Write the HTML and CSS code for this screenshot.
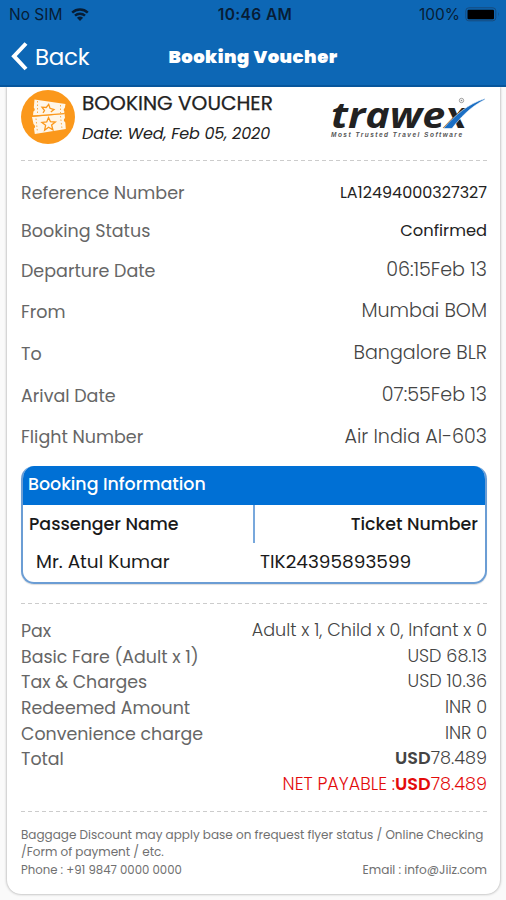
FILE: index.html
```html
<!DOCTYPE html>
<html lang="en">
<head>
<meta charset="utf-8">
<title>Booking Voucher</title>
<link rel="stylesheet" href="styles.css">
</head>
<body>
<header class="topbar">
  <div class="status">
    <div class="carrier"><span>No SIM</span>
      <svg class="wifi" viewBox="0 0 18 13"><path d="M1.2 4.6a11.4 11.4 0 0 1 15.6 0M4 7.6a7.4 7.4 0 0 1 10 0" fill="none" stroke="#071d35" stroke-width="2.5"/><path d="M5.9 9.8a4.6 4.6 0 0 1 6.2 0L9 13z" fill="#071d35"/></svg>
    </div>
    <div class="clock">10:46 AM</div>
    <div class="power"><span>100%</span>
      <svg class="battery" viewBox="0 0 36 15"><rect x=".8" y=".8" width="30" height="13" rx="3" fill="none" stroke="#174b7d" stroke-width="1"/><rect x="2.5" y="2.8" width="26.5" height="9.5" rx="1" fill="#000"/><path d="M33 5v4.500q1.500-2.250 0-4.500" fill="#174b7d"/></svg>
    </div>
  </div>
  <nav class="nav">
    <a class="back"><svg class="chevron" viewBox="0 0 18 29"><path d="M16 1.500L4 14.200L16 27" fill="none" stroke="#fff" stroke-width="4"/></svg><span>Back</span></a>
    <h1>Booking Voucher</h1>
  </nav>
</header>
<main class="card">
  <section class="heading">
    <svg class="ticket" viewBox="0 0 54 54"><circle cx="27" cy="27" r="27" fill="#fb981b"/>
      <g fill="#fff6e8"><path d="M13.500 9.500L44.500 14l-.7 4q-2 1.500-.4 3.500l-.4 3-31 1 .4-4q2.500-1.500.4-4z"/><path d="M11 27l32.500-3 .5 4q-2.500 2 .3 4.500l.5 6.500-31 5-.8-5.500q2.500-2-.5-4.500z"/></g>
      <g fill="none" stroke="#fb981b" stroke-width="1.300"><path d="M11.500 26.200L43 23.600"/><path d="M22 22.800l1.500-2.300-2.500-3.300 4.200.3 2.500-3.200 1.300 4 4 1.300-3.200 2.400"/><path d="M27.500 27.500l2 4.200 4.800.3-3.700 3 1.300 4.800-4.300-2.500-4 2.900 1-4.900-3.700-2.900 4.800-.5z"/><path d="M16.500 11v13M39.500 15v8M15 28.500l1.500 14M39.500 26l1.500 13" stroke-width=".8" stroke-dasharray="1.500 2"/></g>
    </svg>
    <div class="title"><h2>BOOKING VOUCHER</h2><p>Date: Wed, Feb 05, 2020</p></div>
    <svg class="logo" viewBox="0 0 158 44">
      <text class="logo-name" x="0" y="33" textLength="136" lengthAdjust="spacingAndGlyphs">trawex</text>
      <path d="M112.500 33.500C124 20 137 9 154 3.500V4.500C139 12 129 23 121 33.500z" fill="#1b6fc4" stroke="#fff" stroke-width=".6"/>
      <circle cx="130.500" cy="5.500" r="2.200" fill="none" stroke="#888" stroke-width=".8"/><circle cx="130.500" cy="5.500" r=".8" fill="#888"/>
      <text class="logo-tag" x="0" y="42" textLength="131">Most Trusted Travel Software</text>
    </svg>
  </section>
  <hr>
  <dl class="details">
    <div class="r1"><dt>Reference Number</dt><dd class="code">LA12494000327327</dd></div>
    <div class="r2"><dt>Booking Status</dt><dd class="strong">Confirmed</dd></div>
    <div class="r3"><dt>Departure Date</dt><dd>06:15Feb 13</dd></div>
    <div class="r4"><dt>From</dt><dd>Mumbai BOM</dd></div>
    <div class="r5"><dt>To</dt><dd>Bangalore BLR</dd></div>
    <div class="r6"><dt>Arival Date</dt><dd>07:55Feb 13</dd></div>
    <div class="r7"><dt>Flight Number</dt><dd>Air India AI-603</dd></div>
  </dl>
  <section class="info">
    <h3>Booking Information</h3>
    <div class="cols"><b>Passenger Name</b><b class="ticket-head">Ticket Number</b></div>
    <div class="vals"><span>Mr. Atul Kumar</span><span>TIK24395893599</span></div>
  </section>
  <hr>
  <dl class="fare">
    <div><dt>Pax</dt><dd>Adult x 1, Child x 0, Infant x 0</dd></div>
    <div><dt>Basic Fare (Adult x 1)</dt><dd>USD 68.13</dd></div>
    <div><dt>Tax &amp; Charges</dt><dd>USD 10.36</dd></div>
    <div><dt>Redeemed Amount</dt><dd>INR 0</dd></div>
    <div><dt>Convenience charge</dt><dd>INR 0</dd></div>
    <div><dt>Total</dt><dd><b>USD</b>78.489</dd></div>
    <div class="net"><dd>NET PAYABLE :<b>USD</b>78.489</dd></div>
  </dl>
  <hr>
  <footer>
    <p class="note">Baggage Discount may apply base on frequest flyer status / Online Checking<br>/Form of payment / etc.</p>
    <div class="contact"><span>Phone : +91 9847 0000 0000</span><span class="mail">Email : info@Jiiz.com</span></div>
  </footer>
</main>
</body>
</html>
```
FILE: styles.css
```css
* { box-sizing: border-box; margin: 0; }
body { width: 506px; height: 900px; overflow: hidden; background: #fafafa; font-family: Poppins, Inter, sans-serif; color: #666; display: flex; flex-direction: column; }
.topbar { height: 87px; flex: none; background: #0d67b5; border-bottom: 2px solid #07569c; }
.status { height: 29px; display: grid; grid-template-columns: 1fr auto 1fr; align-items: center; padding: 0 5px 0 9px; font-family: Inter, sans-serif; font-size: 15.500px; color: #071d35; white-space: nowrap; }
.carrier, .power { display: flex; align-items: center; }
.carrier { gap: 9px; }
.power { justify-content: flex-end; gap: 5px; }
.wifi { width: 18px; height: 13px; }
.battery { width: 36px; height: 15px; }
.clock { font-weight: 600; letter-spacing: .4px; }
.nav { height: 56px; display: grid; grid-template-columns: 1fr auto 1fr; align-items: center; color: #fff; }
.back { display: flex; align-items: center; gap: 7px; padding-left: 10px; font-size: 23px; letter-spacing: -.3px; }
.back span { margin-top: -1px; }
.chevron { width: 18px; height: 29px; margin-top: -2px; }
h1 { font-size: 18px; line-height: 24px; font-weight: 900; letter-spacing: .5px; }
.card { width: 493px; height: 807px; flex: none; margin-left: 7px; padding: 0 13px 0 14px; background: #fff; border-radius: 0 0 14px 14px; box-shadow: 0 0 3px rgba(0,0,0,.4); clip-path: inset(0 -5px -6px -5px); }
.heading { height: 73px; display: flex; padding-top: 3px; }
.ticket { width: 54px; height: 54px; flex: none; }
.title { flex: 1; min-width: 0; margin-left: 7px; color: #222; white-space: nowrap; }
h2 { font-size: 20.100px; line-height: 26px; font-weight: 400; -webkit-text-stroke: .25px #222; }
.title p { font-size: 16px; line-height: 24px; margin-top: 6px; font-style: italic; letter-spacing: -.1px; }
.logo { width: 158px; height: 44px; flex: none; margin-top: 5px; margin-right: -2px; overflow: visible; }
.logo-name { font: italic 700 36px "Open Sans", sans-serif; fill: #222; }
.logo-tag { font: italic 600 6.500px "Liberation Sans", sans-serif; fill: #555; }
hr { height: 1px; border: 0; background: repeating-linear-gradient(90deg, #ccc 0 4px, transparent 4px 7px); }
dl div { display: flex; justify-content: space-between; align-items: center; white-space: nowrap; }
.details { padding-top: 13px; font-size: 17.500px; }
.details dd { font-size: 19.100px; font-weight: 300; color: #444; margin-top: -2px; }
.r1, .r2 { height: 38px; }
.r3, .r4, .r6 { height: 41px; }
.r5 { height: 43px; }
.r7 { height: 42px; }
.details .code { font-size: 16px; font-weight: 400; color: #222; }
.details .strong { font-size: 16.300px; font-weight: 400; color: #222; }
.info { height: 118px; margin-top: 8px; border: 2px solid #6b9dd4; border-top: 0; border-radius: 13px; overflow: hidden; color: #1a1a1a; box-shadow: 0 1px 1px #ddd; }
h3 { height: 39px; line-height: 37px; padding-left: 7px; margin: 0 -2px; background: #0070d5; color: #fff; font-size: 17.400px; font-weight: 500; }
.cols { height: 38px; display: grid; grid-template-columns: 230px 1fr; line-height: 38px; font-size: 17.400px; }
.cols b { font-weight: 500; padding: 0 7px 0 6px; }
.ticket-head { border-left: 2px solid #78a8dc; text-align: right; }
.vals { display: grid; grid-template-columns: 224px 1fr; padding-left: 13px; line-height: 38px; font-size: 18.500px; }
.info + hr { margin-top: 19px; }
.fare { padding-top: 14px; font-size: 17.400px; height: 207px; }
.fare div { height: 25.700px; }
.fare dd { font-size: 17.600px; font-weight: 300; color: #444; margin-top: -2px; }
.fare .net { justify-content: flex-end; }
.fare .net dd { color: #e30b0b; }
.fare b { font-weight: 600; }
footer { padding-top: 14px; font-size: 12px; white-space: nowrap; color: #707070; }
.note { line-height: 17px; }
.contact { display: flex; justify-content: space-between; line-height: 20px; font-size: 11.700px; }
.mail { font-size: 12.100px; }
```
